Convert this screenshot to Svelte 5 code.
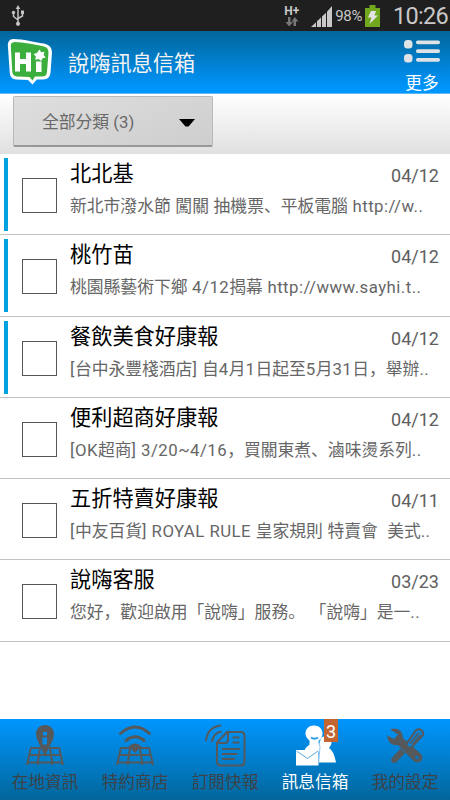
<script lang="ts">
  interface Message {
    title: string;
    date: string;
    preview: string;
    unread: boolean;
  }

  const messages: Message[] = [
    { title: "北北基", date: "04/12", preview: "新北市潑水節 闖關 抽機票、平板電腦 http://w..", unread: true },
    { title: "桃竹苗", date: "04/12", preview: "桃園縣藝術下鄉 4/12揭幕 http://www.sayhi.t..", unread: true },
    { title: "餐飲美食好康報", date: "04/12", preview: "[台中永豐棧酒店] 自4月1日起至5月31日，舉辦..", unread: true },
    { title: "便利超商好康報", date: "04/12", preview: "[OK超商] 3/20~4/16，買關東煮、滷味燙系列..", unread: false },
    { title: "五折特賣好康報", date: "04/11", preview: "[中友百貨] ROYAL RULE 皇家規則 特賣會  美式..", unread: false },
    { title: "說嗨客服", date: "03/23", preview: "您好，歡迎啟用「說嗨」服務。 「說嗨」是一..", unread: false },
  ];

  const tabs = [
    { id: "local", label: "在地資訊" },
    { id: "shops", label: "特約商店" },
    { id: "news", label: "訂閱快報" },
    { id: "inbox", label: "訊息信箱" },
    { id: "settings", label: "我的設定" },
  ];

  const unreadCount = messages.filter((m) => m.unread).length;

  let activeTab = $state("inbox");
  let selected: boolean[] = $state(messages.map(() => false));

  // odd entries are the latin runs, which get a little extra tracking
  function splitRuns(text: string): string[] {
    return text.split(/([ -~]+)/);
  }
</script>

<div class="screen">
  <div class="status-bar">
    <svg class="usb" width="14" height="22" viewBox="0 0 14 22" fill="none" stroke="#c4c4c4" stroke-width="1.5">
      <path d="M7 3v15M2.500 8v3.500L7 15M11.500 8v3L7 13.500" />
      <path d="M7 0l2.300 4H4.700z" fill="#c4c4c4" stroke="none" />
      <circle cx="7" cy="18.800" r="2.100" fill="#c4c4c4" stroke="none" />
      <circle cx="2.500" cy="7.500" r="1.700" fill="#c4c4c4" stroke="none" />
      <path d="M10 5.500h3v3.500h-3z" fill="#c4c4c4" stroke="none" />
    </svg>
    <div class="network">
      <span>H+</span>
      <svg width="14" height="10" viewBox="0 0 14 10" fill="#777">
        <path d="M3 0h2.500v5H8L4.200 9.500.5 5H3z" />
        <path d="M8.500 9H11V4.500h2.500L9.800 0 6.500 4.500h2z" />
      </svg>
    </div>
    <svg class="signal" width="22" height="21" viewBox="0 0 22 21" fill="#c8c8c8">
      <path d="M0 21l5-4.800V21zM6 21v-5.700l4-3.800V21zM11 21V10.500l4-3.800V21zM16 21V5.800L21 0v21z" />
    </svg>
    <span class="percent">98%</span>
    <svg class="battery" width="15" height="22" viewBox="0 0 15 22">
      <path d="M4.500 0h6v3H15v19H0V3h4.500z" fill="#71a81e" />
      <path d="M6 6h5L9.500 10.500H13L4.500 19l2-6.500H3z" fill="#e4e4e4" />
    </svg>
    <span class="clock">10:26</span>
  </div>

  <header class="header">
    <svg class="logo" width="46" height="46" viewBox="0 0 46 46">
      <path
        d="M6 0C17 0 26 3 37 4.500q8 1.500 8 9L43.500 34q-1 6.500-7 6.500h-6.700L25.500 45.500 21 41 9 40.500q-5.500-.5-6.200-6L.800 6Q1 .5 6 0z"
        fill="#fff"
      />
      <path
        d="M7.500 3C17 3 26 5.500 36 7.300q5.500 1 5.500 6.200L40 33q-.5 4.500-4.500 4.500H28L25.500 41.500 22.500 38 10 37.500q-4.200-.3-4.700-4.500L3.800 7q-.2-3.500 3.700-4z"
        fill="#3cae3e"
      />
      <path d="M8 13.500h5V20h6v-6.500h5v19h-5V25h-6v7.500H8zM29 22.500h5.500V33H29z" fill="#fff" />
      <path
        d="M32.500 10.500l1.800 2.800 3.300-.6-1 3.200 2.200 2.600-3.200.7-1.500 2.900-2.500-2-3.400.7.700-3.300-2.300-2.400 3.300-1z"
        fill="#fff"
      />
    </svg>
    <h1>說嗨訊息信箱</h1>
    <button class="more">
      <svg width="38" height="25" viewBox="0 0 38 25" fill="#dfe3e6">
        <rect x="1" y="1" width="8.500" height="8.500" rx="3.500" />
        <rect x="1" y="15" width="8.500" height="8.500" rx="3.500" />
        <rect x="13" y="1.500" width="24" height="3.800" rx="1.800" />
        <rect x="13" y="10.200" width="24" height="3.800" rx="1.800" />
        <rect x="13" y="19" width="24" height="3.800" rx="1.800" />
      </svg>
      <span>更多</span>
    </button>
  </header>

  <div class="filter-bar">
    <button class="filter">
      <span>全部分類 ({unreadCount})</span>
      <svg width="16" height="8" viewBox="0 0 16 8"><path d="M0 0h16L9.500 7.500h-3z" /></svg>
    </button>
  </div>

  <ul class="list">
    {#each messages as message, i}
      <li class="row" class:unread={message.unread}>
        <button
          class="checkbox"
          class:checked={selected[i]}
          aria-label={message.title}
          onclick={() => (selected[i] = !selected[i])}
        ></button>
        <div class="body">
          <div class="top">
            <span class="title">{message.title}</span>
            <span class="date">{message.date}</span>
          </div>
          <p class="preview">
            {#each splitRuns(message.preview) as run, n}<span class:latin={n % 2 === 1}>{run}</span>{/each}
          </p>
        </div>
      </li>
    {/each}
  </ul>

  <nav class="tabs">
    {#each tabs as tab}
      <button class="tab" class:active={activeTab === tab.id} onclick={() => (activeTab = tab.id)}>
        <span class="tab-icon">
          <svg width="46" height="46" viewBox="0 0 46 46" fill="none" stroke="currentColor" stroke-width="2">
            {#if tab.id === "local" || tab.id === "shops"}
              <path d="M9 24h28M7 31h32M5 38.500h36M9 23.500L5 41M37 23.500L41 41M18 24l-2.500 17M28 24l2.500 17" />
            {/if}
            {#if tab.id === "local"}
              <path
                d="M23 1c-5.500 0-9 4-9 9 0 7 6 13 9 23.500C26 23 32 17 32 10c0-5-3.500-9-9-9z"
                fill="currentColor"
                stroke="none"
              />
              <path d="M21 8h4v3.500h-4zM20.500 13.500h4.500v7h-4.500z" fill="#078be8" stroke="none" />
            {:else if tab.id === "shops"}
              <path d="M8.500 9.500q14.500-13 29 0M14 16.500q9-7.500 18 0" stroke-width="3" stroke-linecap="round" />
              <path d="M16.500 22.500q6.500-6 13 0L23 29z" fill="currentColor" stroke="none" />
            {:else if tab.id === "news"}
              <path d="M4 17Q5.500 3 19 1.500M10 18Q11 9 19.500 7.500" />
              <path d="M25 8h13.500q4 0 4 4v25.500q0 4-4 4H19q-4 0-4-4V18.500z" />
              <path d="M26 8.500v7q0 3.500-3.500 3.500H15.500M30.500 13.500h7M30.500 18.500h7M20 25h18M20 30h15.500M20 35h13" />
            {:else if tab.id === "inbox"}
              <g fill="currentColor" stroke="none">
                <path d="M22 1.500c5 0 8.500 3.500 8.500 8 0 3-1.500 5.500-3.500 7v4c2 2 4 3 4.500 7H12.500c.5-4 3-5 5-7v-4c-2-1.500-4-4-4-7 0-4.500 3.500-8 8.500-8z" />
                <path d="M29 14q2-2 5.500-2c4 0 5 2.500 5 6 0 3-1.500 4.500-2.500 6 4 3 5.500 7 7 14.500H27V21z" />
              </g>
              <path d="M19 13.500q3.500 2.500 7 0" stroke="#2b9de8" stroke-width="2" />
              <path d="M4 26h22.500v15.500H4z" fill="currentColor" stroke="none" />
              <path d="M27 15.500q-1 4 1 7l-1.500 18" stroke="#8cc6f0" stroke-width="1" />
              <path d="M4.500 27l11 7.500L26 27" stroke="#55a9df" stroke-width="1" />
            {:else}
              <path
                d="M8 5.500C14 2.500 21 6 21 14l17.500 15.500q3.500 4 .5 7.500-4 3-8-.5L16 21C10 22 5 18 5.500 11.500l6.500 3.500 4-4.500z"
                fill="currentColor"
                stroke="none"
              />
              <circle cx="35" cy="33.500" r="1.800" fill="#0a76c0" stroke="none" />
              <path d="M25.500 18.500L24 21l3 3 3-1L41 11q1-3.500-2.500-5.500-3.500-1-5 1z" fill="#0a80d4" />
              <path d="M28 19.500L36.500 9M30.500 20.500L38.500 11" stroke-width="1.500" />
              <path d="M18.500 24.500l4.500 4.500-8 8.500q-3.500 3-5.500 0-1-1.500 0-3z" fill="currentColor" stroke="none" />
            {/if}
          </svg>
          {#if tab.id === "inbox"}
            <span class="badge">{unreadCount}</span>
          {/if}
        </span>
        <span class="tab-label">{tab.label}</span>
      </button>
    {/each}
  </nav>
</div>

<style>
  :global(body) {
    margin: 0;
  }

  .screen {
    display: flex;
    flex-direction: column;
    width: 450px;
    height: 800px;
    overflow: hidden;
    background: #fff;
    font-family: Roboto, "Noto Sans CJK SC", sans-serif;
  }

  button {
    padding: 0;
    border: none;
    background: none;
    font-family: inherit;
    cursor: pointer;
  }

  svg {
    display: block;
    flex: none;
  }

  .status-bar {
    display: flex;
    align-items: center;
    flex: none;
    height: 31px;
    box-sizing: border-box;
    padding: 1px 2px 0 11px;
    background: #1f1f1f;
    color: #c8c8c8;
  }

  .network {
    display: flex;
    flex-direction: column;
    align-items: center;
    margin-left: auto;
    margin-right: 12px;
    font-size: 12px;
    font-weight: 700;
    line-height: 12px;
  }

  .percent {
    margin: 0 3px 0 2px;
    font-size: 15px;
    letter-spacing: -0.4px;
  }

  .clock {
    width: 55px;
    margin-left: 13px;
    font-size: 23.5px;
    letter-spacing: -0.7px;
  }

  .header {
    display: flex;
    align-items: center;
    flex: none;
    height: 63px;
    box-sizing: border-box;
    padding: 0 9px 0 7px;
    border-bottom: 1px solid #5db7fb;
    background: linear-gradient(#02669a, #0096ff 95%);
  }

  h1 {
    margin: 4px 0 0 15px;
    color: #f3f3f3;
    font-size: 21.2px;
    font-weight: 400;
    line-height: 30px;
  }

  .more {
    display: flex;
    flex-direction: column;
    align-items: center;
    align-self: flex-start;
    margin-top: 8px;
    margin-left: auto;
    color: #fff;
    font-size: 16.7px;
    line-height: 24px;
  }

  .more span {
    margin-top: 9px;
    line-height: 22px;
  }

  .filter-bar {
    flex: none;
    height: 60px;
    box-sizing: border-box;
    padding: 2px 13px;
    background: linear-gradient(#fff, #e0e0e0);
  }

  .filter {
    display: flex;
    align-items: center;
    justify-content: space-between;
    width: 200px;
    height: 51px;
    box-sizing: border-box;
    padding: 0 17px 0 28px;
    border: 1px solid #b9b9b9;
    border-bottom: 2px solid #989898;
    border-radius: 2px;
    background: linear-gradient(160deg, #dedede, #cecece);
    color: #696969;
    font-size: 16.8px;
  }

  .filter svg {
    margin-top: 3px;
  }

  .list {
    flex: 1;
    margin: 0;
    padding: 0;
    list-style: none;
  }

  .row {
    display: flex;
    height: 81.25px;
    box-sizing: border-box;
    border-bottom: 1px solid #c2c2c2;
  }

  .row::before {
    content: "";
    flex: none;
    width: 4px;
    height: 73px;
    margin: 4px 14px 0 4px;
  }

  .row.unread::before {
    background: #00a2e0;
  }

  .checkbox {
    flex: none;
    width: 35px;
    height: 35px;
    margin-top: 24px;
    border: 1px solid #565656;
    background: #fff;
  }

  .checkbox.checked {
    background: #00a2e0;
  }

  .body {
    flex: 1;
    min-width: 0;
    padding: 5px 11px 0 13px;
  }

  .top {
    display: flex;
    justify-content: space-between;
    height: 32px;
  }

  .title {
    color: #000;
    font-size: 21.2px;
    line-height: 30px;
  }

  .date {
    color: #606060;
    font-size: 18px;
    line-height: 33px;
  }

  .preview {
    margin: 2px 0 0;
    color: #666;
    font-size: 16.8px;
    line-height: 26px;
    white-space: nowrap;
  }

  .preview span {
    white-space: pre;
  }

  .preview .latin {
    letter-spacing: 0.47px;
  }

  .tabs {
    display: flex;
    flex: none;
    height: 81px;
    background: linear-gradient(#0096ff, #02669a);
  }

  .tab {
    display: flex;
    flex: 1;
    flex-direction: column;
    align-items: center;
    padding-top: 5px;
    color: #56595c;
  }

  .tab.active {
    color: #fff;
  }

  .tab-icon {
    position: relative;
  }

  .badge {
    position: absolute;
    top: -5px;
    right: 0;
    width: 14px;
    height: 23px;
    background: #c36530;
    color: #fff;
    font-size: 18px;
    line-height: 25px;
  }

  .tab-label {
    color: #3d4247;
    font-size: 16.7px;
    line-height: 26px;
  }

  .tab.active .tab-label {
    color: #fff;
  }
</style>
